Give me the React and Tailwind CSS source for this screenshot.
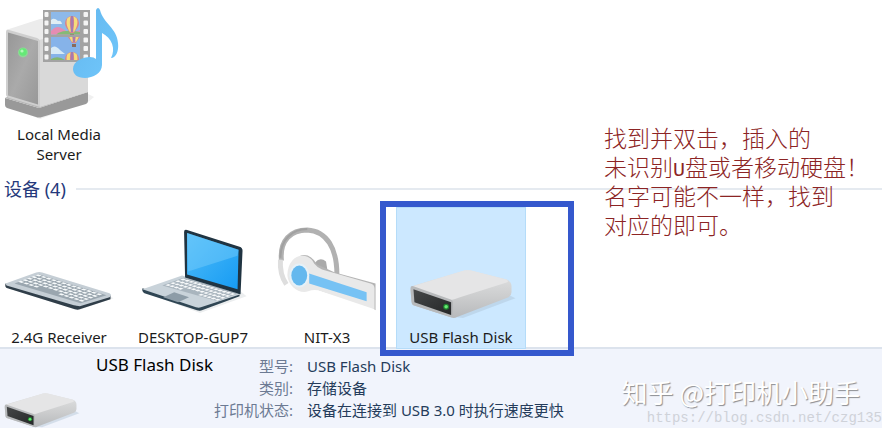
import { useId } from "react";

const propiedades = [
  { etiqueta: "型号:", valor: "USB Flash Disk" },
  { etiqueta: "类别:", valor: "存储设备" },
  { etiqueta: "打印机状态:", valor: "设备在连接到 USB 3.0 时执行速度更快" },
];

const rango = (n) => Array.from({ length: n }, (_, i) => i);

// teclas sobre un plano inclinado: (ox, oy) origen, u = a lo largo, v = a lo ancho
function Teclas({ ox, oy, u, v, cols, filas, color }) {
  const punto = (a, b) => `${ox + u[0] * a + v[0] * b},${oy + u[1] * a + v[1] * b}`;
  return rango(filas).map((f) =>
    rango(cols).map((c) => {
      if (f === filas - 1 && c > 3 && c < 8) return null;
      const a = c / cols;
      const b = f / filas;
      const da = 0.72 / cols;
      const db = 0.6 / filas;
      return (
        <polygon
          key={`${f}-${c}`}
          points={`${punto(a, b)} ${punto(a + da, b)} ${punto(a + da, b + db)} ${punto(a, b + db)}`}
          fill={color}
        />
      );
    })
  );
}

function Globo({ x, y }) {
  return (
    <g transform={`translate(${x} ${y})`}>
      <path d="M-7 -2 A7 7 0 0 1 7 -2 C7 3 3 5 2 8 H-2 C-3 5 -7 3 -7 -2Z" fill="#d9848c" />
      <path d="M-4.5 -7 C-7 -2 -4 4 -2 7 H0 C-2 3 -3 -4 -1 -9Z" fill="#f5dc7b" />
      <path d="M4.5 -7 C7 -2 4 4 2 7 H0 C2 3 3 -4 1 -9Z" fill="#f5dc7b" />
      <path d="M-1.3 -9 H1.3 V7 H-1.3Z" fill="#a77ab0" />
      <path d="M-2 9 H2 V12 H-2Z" fill="#8a6a5c" />
    </g>
  );
}

function IconoServidor() {
  const id = useId();
  return (
    <svg viewBox="-6 0 130 125" className="block w-full" aria-hidden="true">
      <defs>
        <linearGradient id={`${id}f`} x1="0" y1="0" x2="1" y2="1">
          <stop offset="0" stopColor="#979797" />
          <stop offset="0.5" stopColor="#aaaaaa" />
          <stop offset="1" stopColor="#989898" />
        </linearGradient>
        <linearGradient id={`${id}n`} x1="0" y1="0" x2="1" y2="1">
          <stop offset="0" stopColor="#63b7ee" />
          <stop offset="1" stopColor="#71c7fb" />
        </linearGradient>
        <clipPath id={`${id}a`}><path d="M51 12H80V34.500H51Z" /></clipPath>
        <clipPath id={`${id}b`}><path d="M51 37H80V60H51Z" /></clipPath>
      </defs>
      <path d="M88 94L94 97L88 102L40 119L30 115Z" fill="#f0f0f0" />
      <path d="M5 98L39 108L88 92V101Q88 103 86 104L42 117Q39 118 36 117L7 108Q5 107 5 105Z" fill="#999" />
      <path d="M5 98L39 108L88 92L84 90L39 104L9 96Z" fill="#b6b6b6" />
      <path d="M6 30L40 19Q45 18 50 20L88 32L40 41Z" fill="#ececec" />
      <path d="M39 40L88 28V92L40 107Z" fill="#d9d9d9" />
      <path d="M6 32Q6 29 9 30L37 38Q40 39 40 42V107L9 98Q6 97 6 94Z" fill="#cfcfcf" />
      <path d="M8 32.500L38 41V104.500L8 95.500Z" fill={`url(#${id}f)`} />
      <circle cx="23" cy="52.500" r="5" fill="#8fd897" />
      <circle cx="23" cy="52" r="3.800" fill="#65e977" />
      <circle cx="22" cy="51" r="1.600" fill="#b2f8b7" />
      <path d="M43 10H90V62H43Z" fill="#a3a3a3" />
      {rango(6).map((i) => (
        <g key={i} fill="#f4f4f4">
          <rect x="44.500" y={12 + i * 8.5} width="4" height="5" rx="1" />
          <rect x="83.500" y={12 + i * 8.5} width="4.500" height="5" rx="1" />
        </g>
      ))}
      <g clipPath={`url(#${id}a)`}>
        <path d="M50 10H82V36H50Z" fill="#8db9e9" />
        <path d="M51 20Q54 17 58 21Q61 20 62 24H51Z" fill="#e0eef4" />
        <path d="M51 31Q57 24 63 29Q70 35 80 30V35H51Z" fill="#e58db2" />
        <path d="M58 33Q66 29 80 32V35H56Z" fill="#86b976" />
        <Globo x={72} y={25} />
      </g>
      <g clipPath={`url(#${id}b)`}>
        <path d="M50 36H82V61H50Z" fill="#86b3e9" />
        <path d="M51 48Q55 44 60 50L65 54H51Z" fill="#d8eaf6" />
        <Globo x={74} y={35} />
        <Globo x={72} y={61} />
        <path d="M51 59Q58 55 65 60H51Z" fill="#83b670" />
      </g>
      <path
        d="M96 10Q98 6 100 10C103 23 117 28 118 43C119 51 116 58 111 58C116 49 112 38 102 33V65C102 73 93 78 85 78C77 78 73 74 73 69C73 61 83 57 90 57Q94 57 96 59Z"
        fill={`url(#${id}n)`}
      />
    </svg>
  );
}

function IconoTeclado() {
  return (
    <svg viewBox="-6 220 130 106" className="block w-full" aria-hidden="true">
      <path d="M8 289L78 311L114 299L108 296Z" fill="#eceeef" />
      <path d="M5 284L77 306L111 296V300L80 310Q78 311 75 310L7 289Q4 288 5 284Z" fill="#303e49" />
      <path d="M5 284L36 273Q39 272 42 273L110 294Q113 296 110 298L80 307L74 306L6 286Z" fill="#c5ced5" />
      <path d="M14 284L39 275L107 296L81 304Z" fill="#9aa6af" />
      <Teclas ox={38} oy={275} u={[66, 20.5]} v={[-22, 8]} cols={13} filas={5} color="#f7fafb" />
    </svg>
  );
}

function IconoPortatil() {
  const id = useId();
  return (
    <svg viewBox="127 220 130 106" className="block w-full" aria-hidden="true">
      <defs>
        <linearGradient id={id} x1="0" y1="0" x2="1" y2="1">
          <stop offset="0" stopColor="#50bdf9" />
          <stop offset="1" stopColor="#169bf3" />
        </linearGradient>
      </defs>
      <path d="M143 293L199 314L246 297L240 292Z" fill="#eceeef" />
      <path d="M141 289L199 307L239 293V297L201 311Q199 312 196 311L143 294Q140 292 141 289Z" fill="#2f4553" />
      <path d="M141 290L181 276L240 295L200 308Q198 309 195 308Z" fill="#c9d3da" />
      <path d="M161 286L183 278L238 294L217 302Z" fill="#a9b5be" />
      <Teclas ox={182} oy={279} u={[54, 16]} v={[-20, 7.5]} cols={13} filas={4} color="#f8fafb" />
      <path d="M173 293L188 298L177 303L162 298Z" fill="#8d9ca7" />
      <path d="M183 232Q183 229 186 230L239 247Q242 248 242 251L240 295L184 278Z" fill="#203442" />
      <path d="M186 233L238 250L237 290L186 275Z" fill={`url(#${id})`} />
      <path d="M186 233L238 250L237 256L187 272Z" fill="#7bcefb" opacity="0.45" />
    </svg>
  );
}

function IconoAuricular() {
  return (
    <svg viewBox="261 220 130 106" className="block w-full" aria-hidden="true">
      <path d="M280 261C278 240 290 230 306 230C326 231 336 249 336 275" fill="none" stroke="#b1b1b1" strokeWidth="5" />
      <path d="M279 260Q278 275 285 285" fill="none" stroke="#dedede" strokeWidth="5" />
      <path d="M279 258C279 239 292 229 306 229" fill="none" stroke="#a0a0a0" strokeWidth="2" />
      <path d="M314 263Q319 257 325 262L327 274L314 276Z" fill="#aaa" />
      <path d="M299 256Q309 253 316 265L334 273L375 284V311L370 307L315 290Z" fill="#b4b4b4" />
      <path
        d="M291 261C296 254 309 254 313 264Q316 268 321 270L370 284Q374 285 374 289V310L317 291Q312 290 307 292C298 295 287 287 286 276Q286 267 291 261Z"
        fill="#e9e9e9"
      />
      <path d="M308 274L366 293V302L308 284Z" fill="#76c2f4" />
      <ellipse cx="298" cy="276" rx="10" ry="12" fill="#e5f1f8" />
      <ellipse cx="298" cy="276" rx="8" ry="10" fill="#64b8ee" />
    </svg>
  );
}

function IconoDisco({ viewBox, className }) {
  const id = useId();
  return (
    <svg viewBox={viewBox} className={className} aria-hidden="true">
      <defs>
        <linearGradient id={`${id}s`} x1="0" y1="0" x2="0" y2="1">
          <stop offset="0" stopColor="#e2e3e4" />
          <stop offset="0.55" stopColor="#cccdce" />
          <stop offset="1" stopColor="#b7b9bb" />
        </linearGradient>
        <linearGradient id={`${id}n`} x1="0" y1="0" x2="1" y2="1">
          <stop offset="0" stopColor="#454748" />
          <stop offset="1" stopColor="#252728" />
        </linearGradient>
      </defs>
      <path d="M454 318L509 296L515 299L462 319Z" fill="#a9bfcf" opacity="0.4" />
      <path d="M409 291Q409 287 413 286L460 272Q465 270 470 271L506 280Q511 282 511 287V293Q511 296 508 298L456 318Q453 320 449 318L412 306Q410 305 410 302Z" fill={`url(#${id}s)`} />
      <path d="M411 287L460 272Q465 270 470 271L506 280Q509 282 506 283L459 298Q454 300 449 301L412 290Z" fill="#e5e5e6" />
      <path d="M409 289Q409 286 412 287L449 300Q452 301 452 304V316Q452 319 449 318L412 306Q410 305 410 302Z" fill="#b7b9bb" />
      <path d="M412 290L450 303V316L413 303Z" fill={`url(#${id}n)`} />
      <circle cx="445" cy="307.500" r="3" fill="#218231" />
      <circle cx="445" cy="307.500" r="1.800" fill="#66ed72" />
    </svg>
  );
}

function Dispositivo({ nombre, seleccionado, children }) {
  return (
    <li className="relative w-[130px]">
      <button
        type="button"
        className={`flex h-[142px] w-full flex-col items-center pt-[13px] ${
          seleccionado ? "bg-[#cce8ff] inset-ring inset-ring-[#b5dcf9]" : ""
        }`}
      >
        {children}
        <span className="leading-6">{nombre}</span>
      </button>
      {seleccionado && (
        <span className="pointer-events-none absolute -top-1.5 -left-4 h-[155px] w-[194px] border-[6px] border-[#3558cd]" />
      )}
    </li>
  );
}

export default function App() {
  return (
    <div className="relative flex min-h-screen flex-col overflow-hidden bg-white font-['Noto_Sans','Noto_Sans_CJK_SC',sans-serif] text-[15px] text-[#1b1b1b]">
      <button type="button" className="-ml-1.5 flex w-[130px] flex-col items-center">
        <IconoServidor />
        <span className="-mt-px w-24 text-center leading-5">Local Media Server</span>
      </button>

      <section className="mt-3">
        <div className="flex h-[25px] items-center gap-2.5 pl-1">
          <h2 className="text-[18px] leading-6 text-[#25397b]">设备 (4)</h2>
          <span className="h-0.5 flex-1 bg-[#e5eaf0]" />
        </div>
        <ul className="relative z-10 mt-1.5 -ml-1.5 flex gap-1">
          <Dispositivo nombre="2.4G Receiver">
            <IconoTeclado />
          </Dispositivo>
          <Dispositivo nombre="DESKTOP-GUP7">
            <IconoPortatil />
          </Dispositivo>
          <Dispositivo nombre="NIT-X3">
            <IconoAuricular />
          </Dispositivo>
          <Dispositivo nombre="USB Flash Disk" seleccionado>
            <IconoDisco viewBox="395 220 130 106" className="block w-full" />
          </Dispositivo>
        </ul>
      </section>

      <footer className="-mt-0.5 flex flex-1 border-t-2 border-[#dce3ed] bg-[#f1f4fc]">
        <div className="flex w-24 flex-none items-end pl-1">
          <IconoDisco viewBox="408 269 108 51" className="block h-9 w-[76px]" />
        </div>
        <h3 className="w-[118px] flex-none pt-1 text-[17px] leading-6 text-black">USB Flash Disk</h3>
        <dl className="grid auto-rows-[22px] grid-cols-[79px_auto] content-start gap-x-3.5 pt-1.5 leading-[22px]">
          {propiedades.map((p) => (
            <div key={p.etiqueta} className="contents">
              <dt className="text-right whitespace-nowrap text-[#6c7a93]">{p.etiqueta}</dt>
              <dd className="whitespace-nowrap text-[#253c5b]">{p.valor}</dd>
            </div>
          ))}
        </dl>
      </footer>

      {/* nota y marcas de agua, por encima de la ventana */}
      <p className="absolute top-[123px] left-[604px] font-['Noto_Sans_CJK_SC',sans-serif] text-[23px] leading-[29px] font-light whitespace-nowrap text-[#8c2424]">
        找到并双击，插入的
        <br />
        未识别<span className="font-['Liberation_Mono',monospace] text-[20px] leading-none">U</span>盘或者移动硬盘！
        <br />
        名字可能不一样，找到
        <br />
        对应的即可。
      </p>
      <p className="absolute right-[22px] bottom-5 font-['Noto_Sans_CJK_SC',sans-serif] text-[26px] leading-8 whitespace-nowrap text-white [text-shadow:1px_1px_1px_#8b8d92]">
        知乎 @打印机小助手
      </p>
      <p className="absolute right-0 bottom-0 font-['Liberation_Mono',monospace] text-[14px] leading-5 whitespace-nowrap text-[#cfd2d9]">
        https://blog.csdn.net/czg135
      </p>
    </div>
  );
}
